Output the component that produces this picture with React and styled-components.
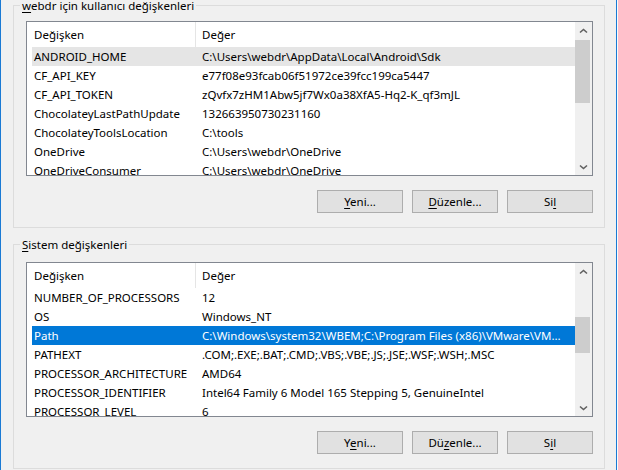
import styled, { createGlobalStyle } from 'styled-components';

const GlobalStyle = createGlobalStyle`
    * {
        box-sizing: border-box;
    }
    html,
    body {
        margin: 0;
        padding: 0;
        background-color: #fafafa;
    }
    body {
        font-family: 'Noto Sans', 'Segoe UI', sans-serif;
        font-size: 11.5px;
        color: #000;
    }
`;

const Frame = styled.div`
    width: 617px;
    height: 470px;
    overflow: hidden;
    padding: 5px 11px 0 12px;
    background-color: #f0f0f0;
    border-left: 1px solid #1a7ad4;
    border-right: 1px solid #1a7ad4;
`;

const Group = styled.section`
    border: 1px solid #dcdcdc;
    padding: 0 11px 14px 12px;
    & + & {
        margin-top: 16px;
    }
`;

const Legend = styled.div`
    display: table;
    height: 15px;
    margin: -8px 0 0 -6px;
    padding: 0 2px;
    line-height: 15px;
    background-color: #f0f0f0;
`;

const Key = styled.span`
    text-decoration: underline;
    text-underline-offset: 2px;
`;

const ListView = styled.div`
    display: flex;
    height: 155px;
    margin-top: ${(p) => p.$offset}px;
    border: 1px solid #828790;
    background-color: #fff;
`;

const ListBody = styled.div`
    flex: 1;
    min-width: 0;
    overflow: hidden;
`;

const Header = styled.div`
    display: grid;
    grid-template-columns: 169px 1fr;
    height: 25px;
`;

const HeaderCell = styled.div`
    padding-left: ${(p) => p.$pad}px;
    line-height: 25px;
    border-right: ${(p) => (p.$divider ? '1px solid #e5e5e5' : 'none')};
`;

const rowColors = {
    hover: { bg: '#e5e5e5', fg: '#000' },
    selected: { bg: '#0078d7', fg: '#fff' },
    normal: { bg: 'transparent', fg: '#000' },
};

const Row = styled.div`
    display: grid;
    grid-template-columns: 164px 1fr;
    height: 19px;
    margin-left: 5px;
    line-height: 19px;
    background-color: ${(p) => rowColors[p.$state].bg};
    color: ${(p) => rowColors[p.$state].fg};
`;

const Cell = styled.div`
    padding-left: ${(p) => p.$pad}px;
    white-space: nowrap;
    overflow: hidden;
`;

const ScrollBar = styled.div`
    display: flex;
    flex-direction: column;
    width: 17px;
    background-color: #f0f0f0;
`;

const ArrowButton = styled.div`
    display: flex;
    align-items: center;
    justify-content: center;
    height: 17px;
    flex-shrink: 0;
`;

const Track = styled.div`
    flex: 1;
`;

const Thumb = styled.div`
    width: 15px;
    height: ${(p) => p.$size}px;
    margin-top: ${(p) => p.$top}px;
    background-color: #cdcdcd;
`;

const Buttons = styled.div`
    display: flex;
    justify-content: flex-end;
    gap: 9px;
    margin-top: 14px;
`;

const Button = styled.button`
    width: 86px;
    height: 23px;
    padding: 0;
    font: inherit;
    color: #000;
    background-color: #e1e1e1;
    border: 1px solid #adadad;
`;

function Chevron({ down }) {
    return (
        <svg width="9" height="6" viewBox="0 0 9 6">
            <polyline
                points={down ? '1,1.5 4.5,4.5 8,1.5' : '1,4.5 4.5,1.5 8,4.5'}
                fill="none"
                stroke="#606060"
                strokeWidth="1.6"
            />
        </svg>
    );
}

// label with one letter underlined as access key
function Label({ text, at }) {
    return (
        <>
            {text.slice(0, at)}
            <Key>{text[at]}</Key>
            {text.slice(at + 1)}
        </>
    );
}

const groups = [
    {
        id: 'user',
        title: 'webdr için kullanıcı değişkenleri',
        titleKey: 0,
        offset: 8,
        thumb: { top: 1, size: 63 },
        keys: [0, 0, 2],
        rows: [
            ['ANDROID_HOME', String.raw`C:\Users\webdr\AppData\Local\Android\Sdk`, 'hover'],
            ['CF_API_KEY', 'e77f08e93fcab06f51972ce39fcc199ca5447'],
            ['CF_API_TOKEN', 'zQvfx7zHM1Abw5jf7Wx0a38XfA5-Hq2-K_qf3mJL'],
            ['ChocolateyLastPathUpdate', '132663950730231160'],
            ['ChocolateyToolsLocation', String.raw`C:\tools`],
            ['OneDrive', String.raw`C:\Users\webdr\OneDrive`],
            ['OneDriveConsumer', String.raw`C:\Users\webdr\OneDrive`],
        ],
    },
    {
        id: 'system',
        title: 'Sistem değişkenleri',
        titleKey: 0,
        offset: 10,
        thumb: { top: 37, size: 36 },
        keys: [1, 2, 1],
        rows: [
            ['NUMBER_OF_PROCESSORS', '12'],
            ['OS', 'Windows_NT'],
            ['Path', String.raw`C:\Windows\system32\WBEM;C:\Program Files (x86)\VMware\VM...`, 'selected'],
            ['PATHEXT', '.COM;.EXE;.BAT;.CMD;.VBS;.VBE;.JS;.JSE;.WSF;.WSH;.MSC'],
            ['PROCESSOR_ARCHITECTURE', 'AMD64'],
            ['PROCESSOR_IDENTIFIER', 'Intel64 Family 6 Model 165 Stepping 5, GenuineIntel'],
            ['PROCESSOR_LEVEL', '6'],
        ],
    },
];

const buttonLabels = ['Yeni...', 'Düzenle...', 'Sil'];

export default function App() {
    return (
        <>
            <GlobalStyle />
            <Frame>
                {groups.map((group) => (
                    <Group key={group.id}>
                        <Legend>
                            <Label text={group.title} at={group.titleKey} />
                        </Legend>
                        <ListView $offset={group.offset}>
                            <ListBody>
                                <Header>
                                    <HeaderCell $pad={7} $divider>
                                        Değişken
                                    </HeaderCell>
                                    <HeaderCell $pad={6}>Değer</HeaderCell>
                                </Header>
                                {group.rows.map(([name, value, state]) => (
                                    <Row key={name} $state={state || 'normal'}>
                                        <Cell $pad={2}>{name}</Cell>
                                        <Cell $pad={6}>{value}</Cell>
                                    </Row>
                                ))}
                            </ListBody>
                            <ScrollBar>
                                <ArrowButton>
                                    <Chevron />
                                </ArrowButton>
                                <Track>
                                    <Thumb
                                        $top={group.thumb.top}
                                        $size={group.thumb.size}
                                    />
                                </Track>
                                <ArrowButton>
                                    <Chevron down />
                                </ArrowButton>
                            </ScrollBar>
                        </ListView>
                        <Buttons>
                            {buttonLabels.map((label, i) => (
                                <Button key={label}>
                                    <Label text={label} at={group.keys[i]} />
                                </Button>
                            ))}
                        </Buttons>
                    </Group>
                ))}
            </Frame>
        </>
    );
}
